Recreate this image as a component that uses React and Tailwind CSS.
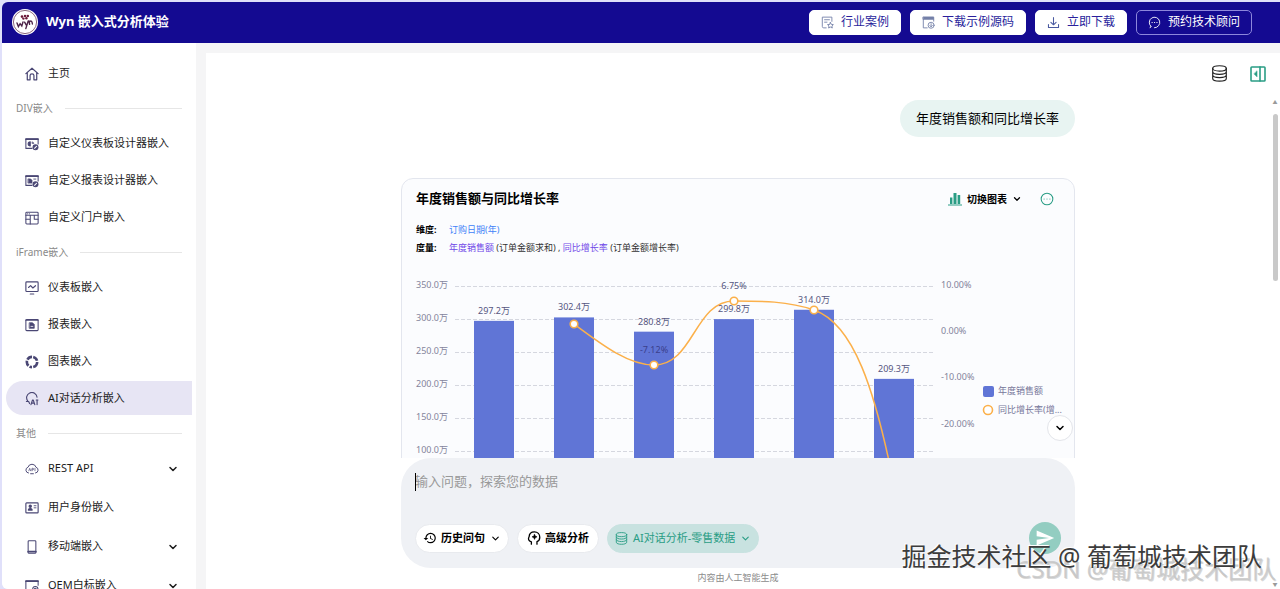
import { useState } from "react";
import { ChevronDown, CircleEllipsis } from "lucide-react";
import { MdHistory, MdSend } from "react-icons/md";

const Svg = ({ children, className = "size-[14px]", sw = 1.2 }) => (
  <svg
    viewBox="0 0 16 16"
    fill="none"
    stroke="currentColor"
    strokeWidth={sw}
    strokeLinecap="round"
    strokeLinejoin="round"
    className={`shrink-0 ${className}`}
    aria-hidden="true"
  >
    {children}
  </svg>
);

const HomeIcon = () => (
  <Svg sw={1.4}>
    <path d="M1 7.6 8 1.4l7 6.2M2.6 6.4v8.2h3.2V9.8c0-2.6 4.4-2.6 4.4 0v4.8h3.2V6.4" />
  </Svg>
);

const DashboardDesignIcon = () => (
  <Svg>
    <path d="M8 13H1V2h14v6" />
    <path d="M1 2.6h14" strokeWidth="1.8" />
    <path d="M6 5.4a2.4 2.4 0 0 0 0 4.8z" fill="currentColor" />
    <path d="M8.4 5.6c1 .2 1.600.8 1.800 1.800H8.400z" fill="currentColor" strokeWidth="0.6" />
    <circle cx="12" cy="11.8" r="2.8" fill="currentColor" />
    <path d="m10.900 12.900 2.200-2.200" stroke="#fff" />
  </Svg>
);

const ReportDesignIcon = () => (
  <Svg>
    <path d="M8 13H1V2h14v6" />
    <path d="M1 2.6h14" strokeWidth="1.8" />
    <path d="M3.8 5.600h2.600l1.600 1.600v3.200H3.800z" fill="currentColor" strokeWidth="0.8" />
    <path d="M10 5.8h2.400" strokeWidth="1" />
    <circle cx="12" cy="11.8" r="2.8" fill="currentColor" />
    <path d="m10.900 12.900 2.200-2.200" stroke="#fff" />
  </Svg>
);

const PortalIcon = () => (
  <Svg>
    <rect x="1" y="1.4" width="14" height="13.4" rx="1" />
    <path d="M1 4.8h14M6 4.8v10M1 9.4h5M10.6 4.8v4.6H15M3 3.1h.1M5 3.1h.1" />
  </Svg>
);

const DashboardIcon = () => (
  <Svg sw={1.3}>
    <rect x="1" y="1" width="14" height="11" rx="1" />
    <path d="m4 7.4 2.4-2.2L9 8l3-2.6M6 14.8h4" />
  </Svg>
);

const ReportIcon = () => (
  <Svg>
    <rect x="1" y="1.8" width="14" height="12.6" rx="1" />
    <path d="M1 2.4h14" strokeWidth="1.6" />
    <path d="M5.2 5.4h3.400l2 2v4.400H5.200z" fill="currentColor" strokeWidth="0.8" />
    <path d="M6.800 9.600h2.200" stroke="#fff" strokeWidth="0.9" />
  </Svg>
);

const ChartIcon = () => (
  <svg viewBox="0 0 16 16" fill="none" className="size-[14px] shrink-0" aria-hidden="true">
    <circle
      cx="8"
      cy="8"
      r="5.9"
      stroke="currentColor"
      strokeWidth="3"
      pathLength="100"
      strokeDasharray="21 4 8 4 17 4 17 4 17 4"
    />
  </svg>
);

const AiChatIcon = () => (
  <Svg sw={1.3}>
    <path d="M3.400 10.600A6 6 0 1 1 13.800 6M1.600 10.800h2.600l1 2.400" />
    <path d="m6.800 14.400 1.800-5.200h.8l1.800 5.200M7.600 12.700h2.800M13.800 9.400v5M12.800 9.200h2" />
  </Svg>
);

const CloudApiIcon = () => (
  <Svg sw={1.1}>
    <path d="M4 12.6a3.4 3.4 0 0 1-.6-6.6 4.8 4.8 0 0 1 9.2 0 3.4 3.4 0 0 1-.6 6.6M6.4 13.4h3.2" />
    <path d="m4.4 10 1-2.8 1 2.8M8 10V7.2h1a.8.8 0 0 1 0 1.7H8M11.4 7.2V10" strokeWidth="0.8" />
  </Svg>
);

const IdentityIcon = () => (
  <Svg sw={1.3}>
    <rect x="1" y="2.2" width="14" height="11.4" rx="0.8" />
    <circle cx="6" cy="6" r="1.3" fill="currentColor" />
    <path d="M3.8 10.4c0-2.4 4.4-2.4 4.4 0z" fill="currentColor" />
    <path d="M10.4 5.4h2.2M10.4 7.8h2.2" strokeWidth="1" />
  </Svg>
);

const MobileIcon = () => (
  <Svg>
    <rect x="3.6" y="0.8" width="8.8" height="14.4" rx="1" />
    <path d="M3.6 13.4h8.8" strokeWidth="2" />
  </Svg>
);

const OemIcon = () => (
  <Svg>
    <path d="M7 14H1V2h14v5" />
    <path d="M1 2.6h14" strokeWidth="1.8" />
    <circle cx="11.8" cy="11.6" r="3" />
    <circle cx="11.8" cy="11.6" r="1" />
  </Svg>
);

const DatabaseIcon = ({ className }) => (
  <Svg className={className} sw={1.1}>
    <ellipse cx="8" cy="3.2" rx="6.4" ry="2.5" />
    <path d="M1.6 3.2v9.4c0 3.4 12.8 3.4 12.8 0V3.2M1.6 6.4c0 3.2 12.8 3.2 12.8 0M1.6 9.5c0 3.2 12.8 3.2 12.8 0" />
  </Svg>
);

const PanelIcon = () => (
  <Svg className="size-4" sw={1.6}>
    <rect x="1" y="1" width="14" height="14" rx="0.8" />
    <path d="M10 1v14" />
    <path d="M7 5.2v5.6L4.2 8z" fill="currentColor" strokeWidth="0.6" />
  </Svg>
);

const CaseIcon = () => (
  <Svg className="size-[13px]" sw={1.1}>
    <path d="M6.4 14.6h-3a1.8 1.8 0 0 1-1.8-1.8V1.400h11.800v5.200M4.400 4.600h6M4.400 7.600h3" />
    <path d="m11.600 8 1.100 2.300 2.500.3-1.800 1.700.5 2.500-2.300-1.200-2.200 1.200.4-2.500-1.800-1.700 2.500-.3z" />
  </Svg>
);

const SourceIcon = () => (
  <Svg className="size-[13px]" sw={1.1}>
    <path d="M1.600 1.200h12.800v2.800H1.600z" fill="currentColor" />
    <path d="M1.600 4v10.600h4.800M14.400 4v2.400" />
    <circle cx="11.200" cy="11.400" r="3.7" />
    <path d="M11.200 9.400v3.800m-1.500-1.400 1.500 1.500 1.500-1.500" />
  </Svg>
);

const DownloadIcon = () => (
  <Svg className="size-[13px]" sw={1.3}>
    <path d="M8 2v8.600M4.800 7.800 8 10.800l3.200-3M1.800 10.400v3.800h12.400v-3.800" />
  </Svg>
);

const ConsultIcon = () => (
  <Svg className="size-[13px]" sw={1.1}>
    <path d="M3.600 12.800A6.500 6.500 0 1 1 8 14.500M3.600 12.800l-1 1.700" />
    <path d="M5 8h.1M8 8h.1M11 8h.1" strokeWidth="1.5" />
  </Svg>
);

const HeadIcon = () => (
  <Svg className="size-[14px]" sw={1.5}>
    <path d="M5 15v-2.600C1.600 11.400 1 9 2.400 6.600 2.600 3 5 1 8.400 1c3.800 0 6.200 2.600 6.200 6 0 2.600-1 4.200-3.200 5.200V15" />
    <path
      d="m8.600 3.800.9 2 2 .9-2 .9-.9 2-.9-2-2-.9 2-.9z"
      fill="currentColor"
      strokeWidth="0.6"
    />
  </Svg>
);

const BarsIcon = () => (
  <svg viewBox="0 0 14 14" className="size-[14px]" fill="currentColor" aria-hidden="true">
    <path d="M2 5.5h2.4V12H2zM5.500 1h3v11h-3zM9.600 3h2.600v9H9.600zM0 12.600h14v.9H0z" />
  </svg>
);

const Logo = () => (
  <svg viewBox="0 0 26 26" className="size-[26px]" aria-hidden="true">
    <circle cx="13" cy="13" r="13" fill="#fff" />
    <circle cx="13" cy="13" r="11.6" fill="none" stroke="#5a2847" strokeWidth="0.7" />
    <g fill="#6b1838">
      <circle cx="10" cy="7.6" r="1.3" />
      <circle cx="13" cy="7" r="1.2" />
      <circle cx="15.800" cy="7" r="1.3" />
      <circle cx="11.400" cy="9.6" r="1.2" />
      <circle cx="14.400" cy="9.2" r="1.2" />
    </g>
    <path
      d="m5 14 1.400 3.600 1.700-2.900 1.700 2.300 1.200-4M12.600 13.200l1.700 3M16.200 12l-2.400 7.600M17.600 15.400l-.5-3.400M17.200 13.400c1.400-2.200 3-1.600 3.200 1.600"
      fill="none"
      stroke="#4c2348"
      strokeWidth="1.4"
      strokeLinecap="round"
    />
  </svg>
);

const grupos = [
  { itens: [{ nome: "主页", Icon: HomeIcon }] },
  {
    titulo: "DIV嵌入",
    itens: [
      { nome: "自定义仪表板设计器嵌入", Icon: DashboardDesignIcon },
      { nome: "自定义报表设计器嵌入", Icon: ReportDesignIcon },
      { nome: "自定义门户嵌入", Icon: PortalIcon },
    ],
  },
  {
    titulo: "iFrame嵌入",
    itens: [
      { nome: "仪表板嵌入", Icon: DashboardIcon },
      { nome: "报表嵌入", Icon: ReportIcon },
      { nome: "图表嵌入", Icon: ChartIcon },
      { nome: "AI对话分析嵌入", Icon: AiChatIcon },
    ],
  },
  {
    titulo: "其他",
    largo: true,
    itens: [
      { nome: "REST API", Icon: CloudApiIcon, submenu: true },
      { nome: "用户身份嵌入", Icon: IdentityIcon },
      { nome: "移动端嵌入", Icon: MobileIcon, submenu: true },
      { nome: "OEM白标嵌入", Icon: OemIcon, submenu: true },
    ],
  },
];

function Header() {
  const botao =
    "flex h-[25px] items-center gap-[7px] rounded-[5px] border px-[11px] text-xs whitespace-nowrap";
  const claro = "border-white bg-white text-[#2a1f9c]";
  return (
    <header className="flex h-[41px] shrink-0 items-center justify-between rounded-tl-md bg-[#140a91] pr-7 pb-px pl-[10px]">
      <div className="flex items-center gap-2">
        <Logo />
        <h1 className="text-[13px] font-bold text-white">Wyn 嵌入式分析体验</h1>
      </div>
      <div className="flex gap-[9px]">
        <button className={`${botao} ${claro}`}>
          <span className="text-[#7480a8]"><CaseIcon /></span>
          行业案例
        </button>
        <button className={`${botao} ${claro}`}>
          <span className="text-[#7480a8]"><SourceIcon /></span>
          下载示例源码
        </button>
        <button className={`${botao} ${claro}`}>
          <span className="text-[#4a5aa0]"><DownloadIcon /></span>
          立即下载
        </button>
        <button className={`${botao} border-[#8d87dc] text-white`}>
          <ConsultIcon />
          预约技术顾问
        </button>
      </div>
    </header>
  );
}

function Sidebar() {
  const [ativo, setAtivo] = useState("AI对话分析嵌入");
  return (
    <nav className="w-[194px] shrink-0 overflow-hidden bg-white px-1 pt-[13px]">
      {grupos.map((grupo) => (
        <section key={grupo.itens[0].nome}>
          {grupo.titulo && (
            <h2 className="flex h-9 items-center gap-3 px-[10px] text-[10px] text-[#8a8a8a]">
              {grupo.titulo}
              <span className="h-px flex-1 bg-[#e6e6e6]" />
            </h2>
          )}
          <ul className={`flex flex-col ${grupo.largo ? "gap-[5px]" : "gap-[3px]"}`}>
            {grupo.itens.map(({ nome, Icon, submenu }) => (
              <li key={nome}>
                <a
                  href="#"
                  onClick={() => setAtivo(nome)}
                  className={`flex h-[34px] items-center gap-[9px] rounded-l-full pt-px pr-[13px] pl-[19px] text-[11px] text-[#1c1c1c] ${
                    ativo === nome ? "bg-[#e7e5f4]" : ""
                  }`}
                >
                  <span className="text-[#4a4774]"><Icon /></span>
                  <span className="flex-1">{nome}</span>
                  {submenu && <ChevronDown className="size-3" strokeWidth={3} />}
                </a>
              </li>
            ))}
          </ul>
        </section>
      ))}
    </nav>
  );
}

const vendas = [297.2, 302.4, 280.8, 299.8, 314.0, 209.3];
const eixoVendas = [350, 300, 250, 200, 150, 100];
const eixoTaxa = [10, 0, -10, -20];
const pontos = [
  [171, 54],
  [251, 95],
  [331, 31],
  [411, 40],
];
const yVenda = (v) => 16 + (350 - v) * 0.66;

function SalesChart() {
  return (
    <svg
      width="670"
      height="230"
      viewBox="0 0 670 230"
      className="block text-[9px]"
      role="img"
      aria-label="年度销售额与同比增长率"
    >
      {eixoVendas.map((v) => (
        <g key={v}>
          <text x="13" y={yVenda(v) + 2} fill="#84849c">{v.toFixed(1)}万</text>
          <path d={`M52 ${Math.round(yVenda(v)) + 0.5}H530`} stroke="#d5d7df" strokeDasharray="4 2" />
        </g>
      ))}
      {eixoTaxa.map((v) => (
        <text key={v} x="538" y={18 + (10 - v) * 4.62} fill="#84849c">{v.toFixed(2)}%</text>
      ))}
      {vendas.map((v, i) => (
        <rect key={v} x={71 + i * 80} y={yVenda(v)} width="40" height={230 - yVenda(v)} fill="#6075d6" />
      ))}
      <path
        d="M171 54C198 74 225 95 251 95C291 95 291 31 331 31C358 31 385 31 411 40C451 54 472 120 491 215"
        fill="none"
        stroke="#fbb04a"
        strokeWidth="1.5"
      />
      {pontos.map(([x, y]) => (
        <circle key={x} cx={x} cy={y} r="3.8" fill="#fff" stroke="#fbb04a" strokeWidth="1.6" />
      ))}
      <g textAnchor="middle" fill="#56567e">
        {vendas.map((v, i) => (
          <text key={v} x={91 + i * 80} y={yVenda(v) - 7}>{v.toFixed(1)}万</text>
        ))}
        <text x="251" y="83" fill="#3b3f8c">-7.12%</text>
        <text x="331" y="19">6.75%</text>
      </g>
      <rect x="580" y="116" width="11" height="11" rx="2" fill="#6075d6" />
      <circle cx="585" cy="140" r="4.5" fill="#fff" stroke="#fbb04a" strokeWidth="1.6" />
      <g fill="#77779a">
        <text x="595" y="124">年度销售额</text>
        <text x="595" y="143">同比增长率(增...</text>
      </g>
    </svg>
  );
}

function ResultCard() {
  return (
    <article className="mt-[41px] rounded-t-xl border border-[#e3e6ee] bg-[#fbfcfe] pl-px">
      <div className="flex h-10 items-center justify-between pr-5 pl-[13px]">
        <h2 className="text-[13px] font-bold text-black">年度销售额与同比增长率</h2>
        <div className="flex items-center gap-[18px]">
          <button className="flex items-center gap-[5px] text-[10px] font-bold text-black">
            <span className="text-[#2a9d85]"><BarsIcon /></span>
            切换图表
            <ChevronDown className="size-[10px]" strokeWidth={3} />
          </button>
          <button aria-label="更多" className="text-[#2a9d85]">
            <CircleEllipsis className="size-[14px]" strokeWidth={1.8} />
          </button>
        </div>
      </div>
      <dl className="grid grid-cols-[33px_1fr] px-[13px] pt-[2px] text-[9px] leading-[18px] text-[#333]">
        <dt className="font-bold text-black">维度:</dt>
        <dd className="text-[#3f83f8]">订购日期(年)</dd>
        <dt className="font-bold text-black">度量:</dt>
        <dd>
          <span className="text-[#7048e8]">年度销售额</span> (订单金额求和) ,{" "}
          <span className="text-[#7048e8]">同比增长率</span> (订单金额增长率)
        </dd>
      </dl>
      <div className="pt-[13px]">
        <SalesChart />
      </div>
    </article>
  );
}

function Composer() {
  const pilula =
    "flex h-[29px] items-center rounded-full border text-[11px] whitespace-nowrap";
  return (
    <form className="relative flex h-[110px] shrink-0 flex-col justify-between rounded-[30px] bg-[#eff1f5] px-[14px] pt-[13px] pb-[14px]">
      <span className="absolute top-[15px] left-[14px] h-[18px] w-px bg-black" />
      <textarea
        aria-label="输入问题"
        placeholder="输入问题，探索您的数据"
        rows={1}
        className="w-full resize-none bg-transparent text-[13px] leading-5 outline-none placeholder:text-[#999]"
      />
      <div className="flex items-center gap-2">
        <button type="button" className={`${pilula} gap-1 border-[#e8eaee] bg-white px-[7px] font-bold text-black`}>
          <MdHistory className="size-[14px]" />
          历史问句
          <ChevronDown className="ml-px size-[11px]" strokeWidth={2.5} />
        </button>
        <button type="button" className={`${pilula} gap-1 border-[#e8eaee] bg-white px-[9px] font-bold text-black`}>
          <HeadIcon />
          高级分析
        </button>
        <button type="button" className={`${pilula} gap-[5px] border-[#c8e2e0] bg-[#c8e2e0] px-[7px] text-[#2a9d85]`}>
          <DatabaseIcon className="size-[13px]" />
          AI对话分析-零售数据
          <ChevronDown className="size-[11px]" strokeWidth={2.5} />
        </button>
        <button
          type="submit"
          aria-label="发送"
          className="ml-auto flex size-8 items-center justify-center rounded-full bg-[#93cdc1] text-white"
        >
          <MdSend className="size-5" />
        </button>
      </div>
    </form>
  );
}

function ChatPanel() {
  return (
    <main className="flex min-w-0 flex-1 flex-col bg-white">
      <div className="flex h-[47px] shrink-0 items-center justify-end gap-[22px] pr-[14px] pb-[6px]">
        <button aria-label="数据集" className="text-[#222]">
          <DatabaseIcon className="size-[17px]" />
        </button>
        <button aria-label="展开面板" className="text-[#2a9d85]">
          <PanelIcon />
        </button>
      </div>
      <div className="flex min-h-0 flex-1">
        <div className="flex min-w-0 flex-1 flex-col items-center">
          <div className="relative flex min-h-0 w-full max-w-[674px] flex-1 flex-col">
            <div className="min-h-0 flex-1 overflow-hidden">
              <div className="flex justify-end">
                <p className="flex h-[37px] items-center rounded-full bg-[#e8f4f2] px-4 text-[13px] text-black">
                  年度销售额和同比增长率
                </p>
              </div>
              <ResultCard />
            </div>
            <button
              aria-label="滚动到底部"
              className="absolute right-[2px] bottom-[127px] flex size-[26px] items-center justify-center rounded-full border border-[#e3e5ea] bg-white text-black"
            >
              <ChevronDown className="size-3" strokeWidth={3} />
            </button>
            <Composer />
          </div>
          <p className="h-[21px] shrink-0 text-[9px] leading-5 text-[#8c8c8c]">
            内容由人工智能生成
          </p>
        </div>
        <div className="flex w-[10px] shrink-0 flex-col items-center">
          <span className="h-[14px] text-[5px] leading-[5px] text-[#9a9a9a]">▲</span>
          <span className="h-[167px] w-[5px] rounded-full bg-[#c9c9c9]" />
          <span className="mt-auto text-[5px] leading-[10px] text-[#9a9a9a]">▼</span>
        </div>
      </div>
    </main>
  );
}

export default function App() {
  return (
    <div className="relative flex h-screen flex-col overflow-hidden bg-[#e0e0fa] pt-[2px] pl-[2px] font-['Noto_Sans','Noto_Sans_CJK_SC',sans-serif]">
      <Header />
      <div className="flex min-h-0 flex-1 gap-[10px] overflow-hidden rounded-bl-md bg-[#f5f5f6]">
        <Sidebar />
        <div className="flex min-w-0 flex-1 pt-[10px]">
          <ChatPanel />
        </div>
      </div>
      <p className="pointer-events-none absolute right-[4px] bottom-[4px] text-[24px] leading-8 whitespace-nowrap text-[#c4c4c4]/80 [text-shadow:1px_1px_0_#d8d8d8]">
        CSDN @葡萄城技术团队
      </p>
      <p className="pointer-events-none absolute right-[18px] bottom-[17px] text-[25px] leading-8 whitespace-nowrap text-[#3c3c3c] [text-shadow:-1px_-1px_0_#fff]">
        掘金技术社区 @ 葡萄城技术团队
      </p>
    </div>
  );
}
